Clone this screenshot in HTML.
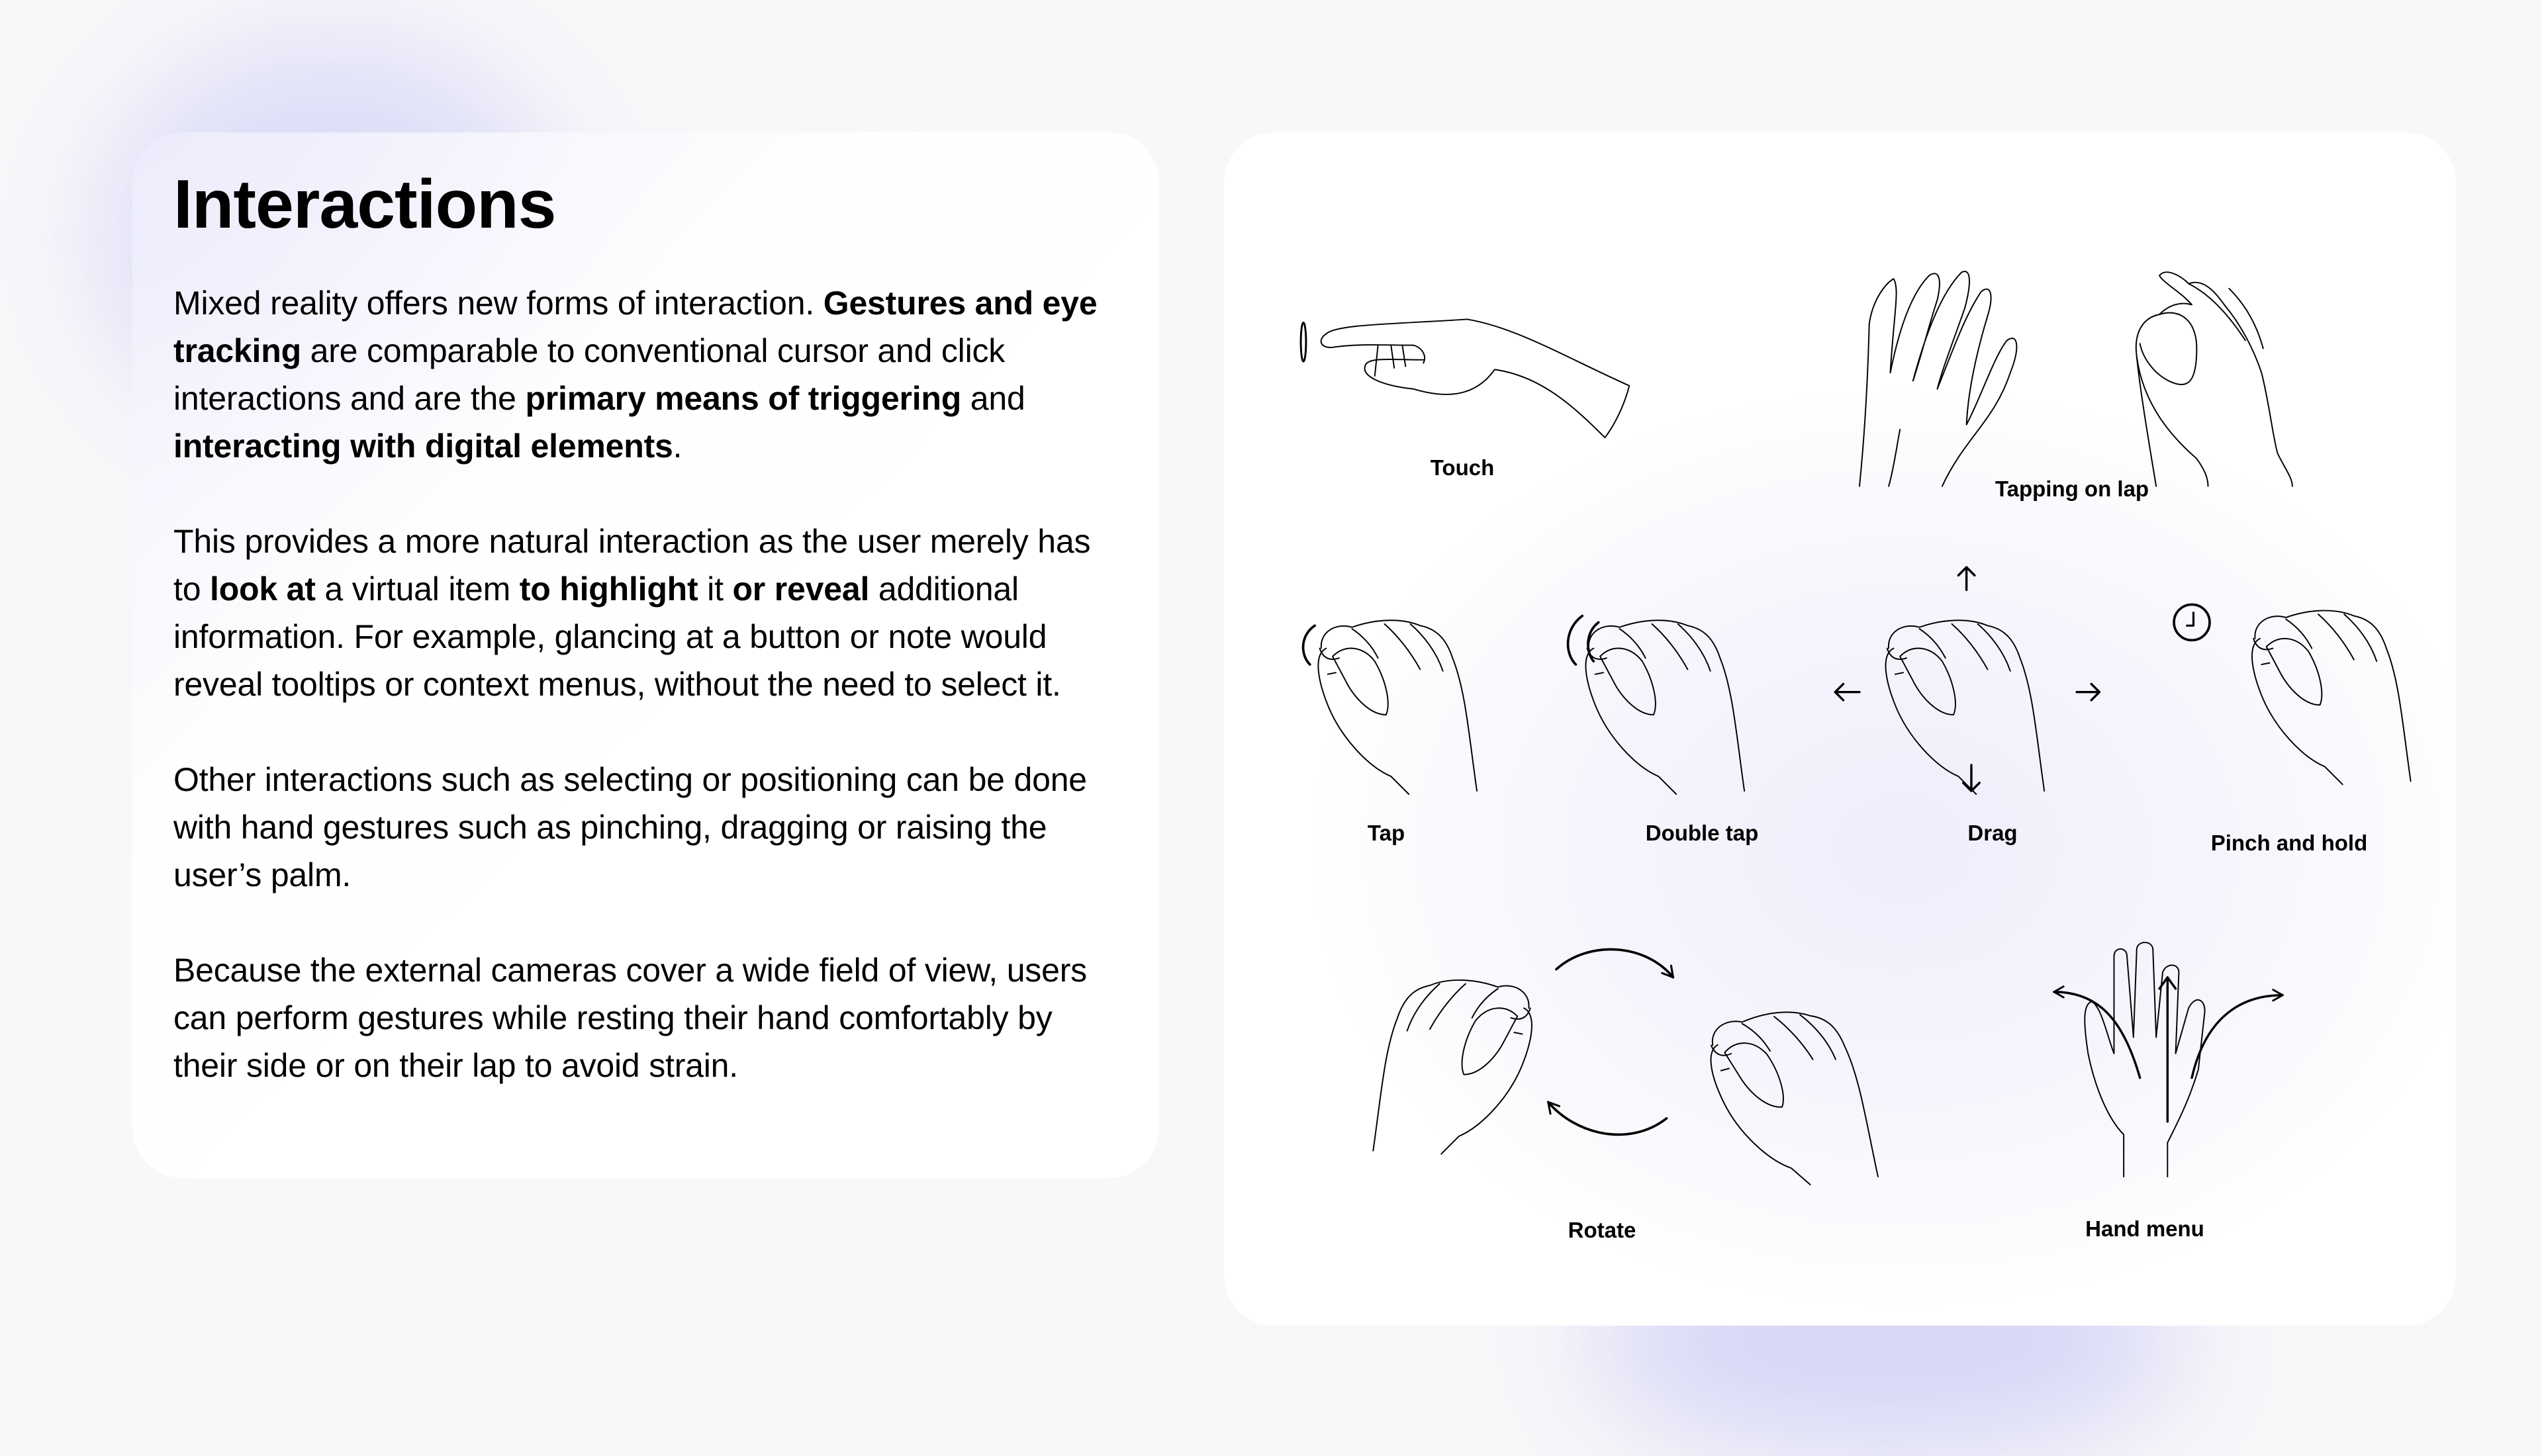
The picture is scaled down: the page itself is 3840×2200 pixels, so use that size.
<!DOCTYPE html>
<html><head><meta charset="utf-8"><style>
html,body{margin:0;padding:0}
body{width:3840px;height:2160px;position:relative;overflow:hidden;background:#f8f8fa;font-family:"Liberation Sans",sans-serif;color:#000}
.blob{position:absolute;border-radius:50%;filter:blur(90px)}
.card{position:absolute;border-radius:76px;background:rgba(255,255,255,0.72)}
#left{left:200px;top:200px;width:1551px;height:1580px;background:linear-gradient(135deg,rgba(236,236,252,0.9) 0%,rgba(255,255,255,0.95) 35%,#fff 100%)}
#right{left:1849px;top:200px;width:1861px;height:1803px;background:radial-gradient(ellipse 900px 700px at 55% 60%,#eeeefc 0%,#f6f6fd 60%,#fff 100%)}
h1{position:absolute;left:262px;top:250px;margin:0;font-size:104px;font-weight:700;letter-spacing:-1px}
.txt{position:absolute;left:262px;top:422px;font-size:50px;line-height:72px;white-space:nowrap;letter-spacing:-0.2px}
.txt p{margin:0 0 72px 0}
.lab{position:absolute;font-size:33px;font-weight:700;transform:translateX(-50%);white-space:nowrap}
svg{position:absolute;left:0;top:0}
</style></head><body>
<div class="blob" style="left:150px;top:60px;width:700px;height:600px;background:#dcdcf8"></div>
<div class="blob" style="left:2400px;top:1850px;width:900px;height:350px;background:#d6d6f6"></div>
<div class="card" id="left"></div>
<div class="card" id="right"></div>
<h1>Interactions</h1>
<div class="txt">
<p>Mixed reality offers new forms of interaction. <b>Gestures and eye</b><br><b>tracking</b> are comparable to conventional cursor and click<br>interactions and are the <b>primary means of triggering</b> and<br><b>interacting with digital elements</b>.</p>
<p>This provides a more natural interaction as the user merely has<br>to <b>look at</b> a virtual item <b>to highlight</b> it <b>or reveal</b> additional<br>information. For example, glancing at a button or note would<br>reveal tooltips or context menus, without the need to select it.</p>
<p>Other interactions such as selecting or positioning can be done<br>with hand gestures such as pinching, dragging or raising the<br>user’s palm.</p>
<p>Because the external cameras cover a wide field of view, users<br>can perform gestures while resting their hand comfortably by<br>their side or on their lap to avoid strain.</p>
</div>
<div class="lab" style="left:2209px;top:688px">Touch</div>
<div class="lab" style="left:3130px;top:720px">Tapping on lap</div>
<div class="lab" style="left:2094px;top:1240px">Tap</div>
<div class="lab" style="left:2571px;top:1240px">Double tap</div>
<div class="lab" style="left:3010px;top:1240px">Drag</div>
<div class="lab" style="left:3458px;top:1255px">Pinch and hold</div>
<div class="lab" style="left:2420px;top:1840px">Rotate</div>
<div class="lab" style="left:3240px;top:1838px">Hand menu</div>
<svg width="3840" height="2160" viewBox="0 0 1568 882" fill="none" stroke="#000" stroke-width="0.8" stroke-linecap="round" stroke-linejoin="round">
<defs>
<g id="pinch">
<path d="M15,22 C14,12 24,6 34,9 C48,4 64,3 76,8 C86,10 92,16 96,28 C104,48 106,75 111,110"/>
<path d="M18,22 C10,26 13,42 19,57 C27,77 44,95 58,101 C63,106 67,110 69,112"/>
<path d="M22,27 C30,19 41,21 48,30 C55,42 58,56 55,63 C45,63 35,52 30,42 Z"/>
<path d="M34,10 C40,14 46,20 50,28"/>
<path d="M54,7 C62,14 70,24 76,35"/>
<path d="M70,7 C78,14 86,24 90,36"/>
<path d="M14,22 C16,28 20,30 26,28"/>
<path d="M19,38 L24,37"/>
</g>
<marker id="ah" viewBox="0 0 10 10" refX="8" refY="5" markerWidth="6" markerHeight="6" orient="auto"><path d="M1,1 L8,5 L1,9" stroke="#000" stroke-width="1.4" fill="none"/></marker>
</defs>
<ellipse cx="804" cy="211" rx="1.6" ry="12" stroke-width="1.2"/>
<path d="M818,206 C824,200 860,200 905,197 C935,202 965,220 1005,238 C1002,250 996,262 990,270 C970,250 950,232 922,228 C910,245 892,246 872,240 C852,238 840,232 842,226 C843,220 858,222 878,222"/>
<path d="M818,206 C812,210 815,216 824,214 C840,212 855,213 872,213 C878,215 880,220 878,224"/>
<path d="M850,213 L848,232 M858,213 L860,227 M865,213 L867,226"/>
<path d="M1147,300 C1150,270 1152,240 1153,200 C1155,185 1163,175 1168,172 C1172,178 1168,195 1166,230 M1166,230 C1172,200 1180,180 1190,170 C1196,166 1198,172 1195,185 C1190,200 1185,220 1180,235 M1180,235 C1188,205 1198,180 1210,168 C1216,165 1216,175 1212,190 C1205,210 1198,228 1195,240 M1195,240 C1205,215 1212,195 1222,180 C1228,175 1230,182 1226,195 C1220,215 1214,240 1213,262 C1222,245 1230,220 1238,210 C1245,205 1246,215 1240,230 C1230,260 1212,270 1198,300"/>
<path d="M1165,300 C1168,290 1170,275 1172,265"/>
<path d="M1330,300 C1325,270 1320,240 1318,220 C1316,205 1322,196 1332,194 C1345,190 1355,198 1355,215 C1355,235 1350,240 1340,236 C1330,232 1322,222 1320,212"/>
<path d="M1332,194 C1338,188 1345,186 1352,188 C1345,180 1335,175 1332,170 C1336,165 1345,170 1350,175 C1358,172 1365,178 1372,188 C1382,200 1390,215 1395,230 C1400,250 1402,270 1405,280 C1410,290 1414,295 1414,300"/>
<path d="M1350,175 C1360,180 1372,190 1385,210 M1375,178 C1385,188 1392,200 1396,215"/>
<path d="M1318,220 C1322,250 1340,270 1355,283 C1360,290 1362,295 1362,300"/>
<use href="#pinch" transform="translate(800,378)"/>
<path d="M811,386 C802,392 802,404 808,410" stroke-width="1.5"/>
<use href="#pinch" transform="translate(965,378)"/>
<path d="M976,380 C965,388 965,403 972,410 M986,384 C978,390 978,402 983,408" stroke-width="1.5"/>
<use href="#pinch" transform="translate(1150,378)"/>
<use href="#pinch" transform="translate(1376,372)"/>
<circle cx="1352" cy="384" r="11" stroke-width="1.5"/>
<path d="M1353,378 L1353,386 L1349,386" stroke-width="1.3"/>
<g stroke-width="1.4">
<path d="M1213,364 L1213,350 M1208,355 L1213,350 L1218,355"/>
<path d="M1147,427 L1132,427 M1137,422 L1132,427 L1137,432"/>
<path d="M1281,427 L1295,427 M1290,422 L1295,427 L1290,432"/>
<path d="M1216,472 L1216,488 M1211,483 L1216,488 L1221,483"/>
</g>
<use href="#pinch" transform="translate(958,600) scale(-1,1)"/>
<use href="#pinch" transform="translate(1040,624) rotate(-4)"/>
<path d="M960,598 C980,580 1015,582 1032,603" stroke-width="1.5" marker-end="url(#ah)"/>
<path d="M1028,690 C1005,708 972,700 955,680" stroke-width="1.5" marker-end="url(#ah)"/>
<path d="M1310,726 L1310,700 C1300,690 1292,670 1288,650 C1285,630 1285,620 1290,618 C1296,620 1300,640 1304,650 L1304,590 C1304,584 1312,584 1312,590 L1316,640 L1318,586 C1318,580 1328,580 1328,586 L1330,640 L1334,600 C1336,594 1344,594 1344,600 L1342,650 L1350,622 C1354,614 1360,616 1360,624 L1356,660 C1350,680 1342,695 1337,705 L1337,726"/>
<path d="M1337,692 L1337,604 M1332,610 L1337,603 L1342,610" stroke-width="1.4"/>
<path d="M1320,665 C1310,630 1295,612 1267,612" stroke-width="1.4" marker-end="url(#ah)"/>
<path d="M1352,665 C1360,630 1380,614 1408,614" stroke-width="1.4" marker-end="url(#ah)"/>
</svg>
</body></html>
